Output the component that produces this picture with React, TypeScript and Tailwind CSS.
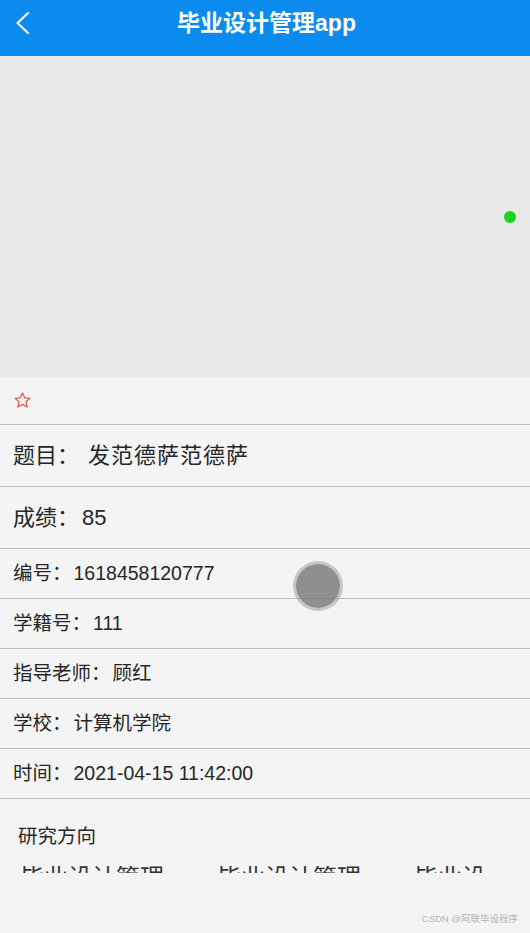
import React from "react";

const font = { fontFamily: '"Liberation Sans", "Noto Sans CJK SC", sans-serif' };

function Row({ label, value, big, gap }: { label: string; value: string; big?: boolean; gap: string }) {
  return (
    <div
      className={`flex items-center border-b border-[#bdbdbd] pl-[13px] text-[#262626] ${big ? "h-[62px] text-[22px]" : "h-[50px] text-[19.5px]"}`}
    >
      <span>{label}</span>
      <span className={gap}>{value}</span>
    </div>
  );
}

export default function App() {
  return (
    <div className="relative w-[530px] h-[933px] overflow-hidden bg-[#f4f4f4]" style={font}>
      <div className="h-[56px] bg-[#0b8bee] flex items-center pb-[10px] relative">
        <svg className="absolute left-[13px] top-[11px]" width="20" height="24" viewBox="0 0 20 24" fill="none">
          <path d="M15 2 L4.5 12 L15 22" stroke="#ffffff" strokeWidth="2" strokeLinecap="round" strokeLinejoin="round" />
        </svg>
        <div className="flex-1 text-center text-white font-bold text-[23px] leading-[28px] pl-[3px]">毕业设计管理app</div>
      </div>
      <div className="h-[321px] bg-[#e8e8e8] relative">
        <div className="absolute left-[504px] top-[155px] w-[12px] h-[12px] rounded-full bg-[#1ad31a]" />
      </div>
      <div className="h-[48px] flex items-center border-b border-[#bdbdbd] pl-[13px]">
        <svg width="19" height="19" viewBox="0 0 24 24" fill="none">
          <path
            d="M12 2.5 L14.8 8.6 L21.4 9.3 L16.4 13.7 L17.9 20.3 L12 16.9 L6.1 20.3 L7.6 13.7 L2.6 9.3 L9.2 8.6 Z"
            stroke="#e4584f"
            strokeWidth="1.6"
            strokeLinejoin="round"
          />
        </svg>
      </div>
      <Row label="题目：" value="发范德萨范德萨" big gap="ml-[9px] tracking-[1px]" />
      <Row label="成绩：" value="85" big gap="ml-[3px]" />
      <Row label="编号：" value="1618458120777" gap="ml-[2px]" />
      <Row label="学籍号：" value="111" gap="ml-[2px]" />
      <Row label="指导老师：" value="顾红" gap="ml-[2px]" />
      <Row label="学校：" value="计算机学院" gap="ml-[2px]" />
      <Row label="时间：" value="2021-04-15 11:42:00" gap="ml-[2px]" />
      <div className="pl-[18px] pt-[24px] leading-[26px] text-[19.5px] text-[#262626]">研究方向</div>
      <div className="mt-[17px] h-[7px] w-[488px] overflow-hidden flex pl-[20px] gap-[53px] text-[24px] leading-[24px] text-[#333] whitespace-nowrap">
        <span>毕业设计管理</span>
        <span>毕业设计管理</span>
        <span>毕业设计管理</span>
      </div>
      <div className="absolute right-[12px] bottom-[7px] text-[9.5px] text-[#b5b5b5]">CSDN @阿联毕设程序</div>
      <div className="absolute left-[296px] top-[564px] w-[44px] h-[44px] rounded-full bg-[#7d7d7d]/85 ring-[3px] ring-[#9a9a9a]/50" />
    </div>
  );
}
